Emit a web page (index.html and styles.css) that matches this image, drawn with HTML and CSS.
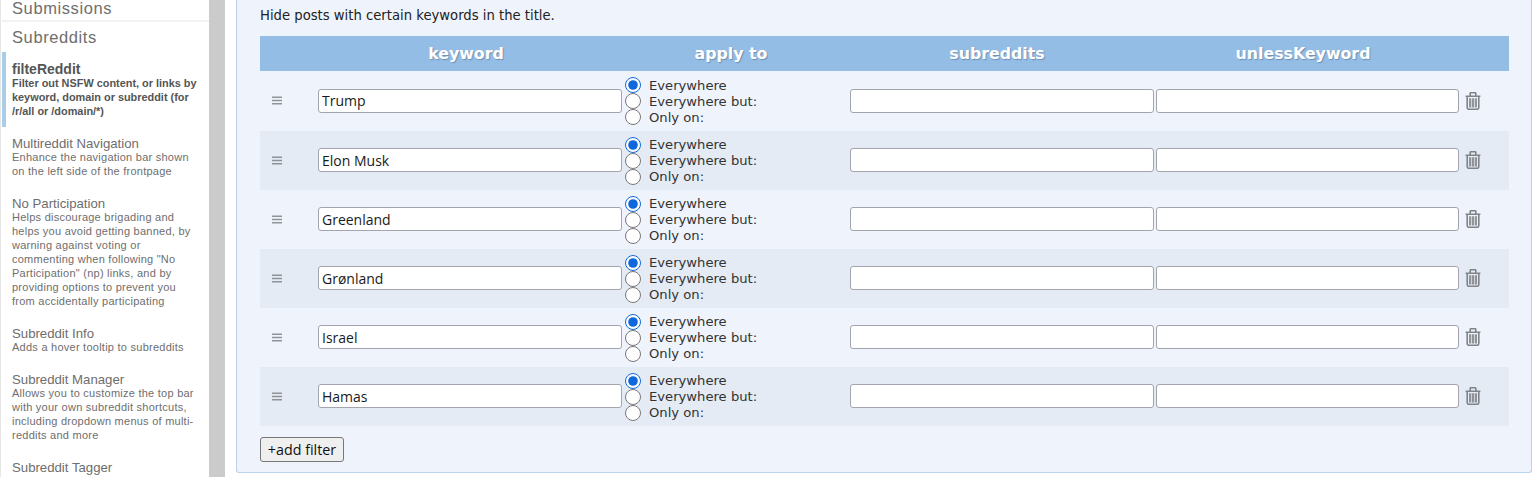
FILE: index.html
```html
<!DOCTYPE html>
<html lang="en">
<head>
<meta charset="utf-8">
<title>RES settings - filteReddit</title>
<link rel="stylesheet" href="styles.css">
</head>
<body>
<svg class="defs" width="0" height="0" aria-hidden="true">
  <symbol id="grip" viewBox="0 0 10 9"><path d="M0 .5h10v1.4H0zM0 3.8h10v1.4H0zM0 7.1h10v1.4H0z"/></symbol>
  <symbol id="trash" viewBox="0 0 16 18"><path fill="none" stroke="currentColor" stroke-width="1.6" d="M.6 4.2h14.8M5.2 4V1.5q0-.8.8-.8h4q.8 0 .8.8V4M2.2 4.4v11.2q0 1.7 1.7 1.7h8.2q1.7 0 1.7-1.7V4.4"/><path fill="currentColor" opacity=".85" d="M4 6.2h2.2v9.4H4zM6.9 6.2h2.2v9.4H6.9zM9.8 6.2H12v9.4H9.8z"/></symbol>
</svg>
<div class="page">
  <nav class="sidebar">
    <div class="category cut">Submissions</div>
    <div class="category open">Subreddits</div>
    <ul class="modules">
      <li class="module active"><b class="mod-name">filteReddit</b><span class="mod-desc">Filter out NSFW content, or links by keyword, domain or subreddit (for /r/all or /domain/*)</span></li>
      <li class="module"><span class="mod-name">Multireddit Navigation</span><span class="mod-desc">Enhance the navigation bar shown on the left side of the frontpage</span></li>
      <li class="module"><span class="mod-name">No Participation</span><span class="mod-desc">Helps discourage brigading and helps you avoid getting banned, by warning against voting or commenting when following "No Participation" (np) links, and by providing options to prevent you from accidentally participating</span></li>
      <li class="module"><span class="mod-name">Subreddit Info</span><span class="mod-desc">Adds a hover tooltip to subreddits</span></li>
      <li class="module"><span class="mod-name">Subreddit Manager</span><span class="mod-desc">Allows you to customize the top bar with your own subreddit shortcuts, including dropdown menus of multi-reddits and more</span></li>
      <li class="module"><span class="mod-name">Subreddit Tagger</span></li>
    </ul>
  </nav>
  <div class="scrollbar"></div>
  <main class="content">
    <section class="panel">
      <p class="intro">Hide posts with certain keywords in the title.</p>
      <div class="table">
        <div class="head">
          <span>keyword</span><span>apply to</span><span>subreddits</span><span>unlessKeyword</span>
        </div>
        <div class="row">
          <svg class="grip"><use href="#grip"/></svg>
          <input class="field" type="text" value="Trump">
          <div class="apply"><label><input type="radio" name="a1" checked>Everywhere</label><label><input type="radio" name="a1">Everywhere but:</label><label><input type="radio" name="a1">Only on:</label></div>
          <input class="field" type="text"><input class="field" type="text">
          <svg class="trash"><use href="#trash"/></svg>
        </div>
        <div class="row">
          <svg class="grip"><use href="#grip"/></svg>
          <input class="field" type="text" value="Elon Musk">
          <div class="apply"><label><input type="radio" name="a2" checked>Everywhere</label><label><input type="radio" name="a2">Everywhere but:</label><label><input type="radio" name="a2">Only on:</label></div>
          <input class="field" type="text"><input class="field" type="text">
          <svg class="trash"><use href="#trash"/></svg>
        </div>
        <div class="row">
          <svg class="grip"><use href="#grip"/></svg>
          <input class="field" type="text" value="Greenland">
          <div class="apply"><label><input type="radio" name="a3" checked>Everywhere</label><label><input type="radio" name="a3">Everywhere but:</label><label><input type="radio" name="a3">Only on:</label></div>
          <input class="field" type="text"><input class="field" type="text">
          <svg class="trash"><use href="#trash"/></svg>
        </div>
        <div class="row">
          <svg class="grip"><use href="#grip"/></svg>
          <input class="field" type="text" value="Grønland">
          <div class="apply"><label><input type="radio" name="a4" checked>Everywhere</label><label><input type="radio" name="a4">Everywhere but:</label><label><input type="radio" name="a4">Only on:</label></div>
          <input class="field" type="text"><input class="field" type="text">
          <svg class="trash"><use href="#trash"/></svg>
        </div>
        <div class="row">
          <svg class="grip"><use href="#grip"/></svg>
          <input class="field" type="text" value="Israel">
          <div class="apply"><label><input type="radio" name="a5" checked>Everywhere</label><label><input type="radio" name="a5">Everywhere but:</label><label><input type="radio" name="a5">Only on:</label></div>
          <input class="field" type="text"><input class="field" type="text">
          <svg class="trash"><use href="#trash"/></svg>
        </div>
        <div class="row">
          <svg class="grip"><use href="#grip"/></svg>
          <input class="field" type="text" value="Hamas">
          <div class="apply"><label><input type="radio" name="a6" checked>Everywhere</label><label><input type="radio" name="a6">Everywhere but:</label><label><input type="radio" name="a6">Only on:</label></div>
          <input class="field" type="text"><input class="field" type="text">
          <svg class="trash"><use href="#trash"/></svg>
        </div>
      </div>
      <button class="add" type="button">+add filter</button>
    </section>
  </main>
</div>
</body>
</html>
```
FILE: styles.css
```css
* { box-sizing: border-box; }
html, body { margin: 0; height: 477px; overflow: hidden; background: #fff; }
.defs { position: absolute; }
.page { display: flex; height: 477px; font-family: "Liberation Sans", Arial, sans-serif; }

.sidebar { width: 209px; flex: none; padding-left: 1px; border-left: 1px solid #e6e6e6; color: #6e6e6e; overflow: hidden; }
.category { font-size: 16.5px; letter-spacing: .6px; padding-left: 10px; line-height: 31px; border-bottom: 2px solid #f2f2f2; }
.category.cut { height: 22px; line-height: 17px; }
.category.open { border-bottom: 0; height: 30px; }
.modules { list-style: none; margin: 0; padding: 0; }
.module { padding: 9px 10px 0 10px; margin-bottom: 9px; font-size: 11px; letter-spacing: .25px; line-height: 14px; }
.module.active { border-left: 4px solid #a9cde6; padding: 10px 10px 0 6px; color: #555; font-weight: 700; font-size: 10.9px; letter-spacing: 0; height: 75px; margin-bottom: 0; }
.mod-name { display: block; font-size: 13.2px; font-weight: 400; letter-spacing: 0; line-height: 16px; margin-bottom: -2px; }
b.mod-name { font-weight: 700; font-size: 14px; line-height: 14px; margin-bottom: 0; }
.mod-desc { display: block; }

.scrollbar { width: 16px; flex: none; background: #cbcbcb; }
.content { flex: 1; padding: 0 4px 4px 11px; min-width: 0; }
.panel { height: 473px; padding: 0 22px 0 23px; background: #eff3fc; border: 1px solid #b9d3ee; border-top: 0; border-radius: 0 0 3px 3px; font-family: "DejaVu Sans", Verdana, sans-serif; color: #222; }
.intro { margin: 0; padding-top: 8px; height: 36px; font-size: 13.2px; line-height: 15px; }

.head { display: grid; grid-template-columns: 50px 312px 218px 314px 298px; height: 35px; align-items: center; background: #94bde6; color: #fff; font-size: 15.8px; font-weight: 700; text-align: center; text-shadow: 1px 1px 1px #6f8fb0; }
.head span:first-child { grid-column: 2; }
.row { display: grid; grid-template-columns: 58px 304px 228px 303px 303px 1fr; height: 59px; align-items: center; }
.head + .row { height: 60px; }
.row:nth-child(odd) { background: #e4ebf4; }
.row .field:nth-of-type(3) { margin-left: 3px; width: 303px; }
.grip { width: 10px; height: 9px; margin: -1px 0 0 12px; fill: #8f9398; }
.trash { width: 16px; height: 18px; margin: -1px 0 0 9px; color: #808387; }
.field { width: 304px; height: 24px; padding: 1px 3px; margin: -1px 0 0; background: #fff; border: 1px solid #a4a4ae; border-radius: 3px; font-family: "Open Sans", "DejaVu Sans", sans-serif; font-size: 14px; color: #1a1a1a; }
.apply { display: flex; flex-direction: column; padding-left: 3px; font-size: 13.15px; color: #333; }
.apply label { display: flex; align-items: center; height: 16px; }
.apply input { width: 16px; height: 16px; margin: 0 8px 0 0; accent-color: #0f67dc; }
.add { display: block; margin-top: 11px; width: 84px; height: 25px; padding: 0; background: #efeff0; border: 1px solid #777; border-radius: 3px; font-family: "Open Sans", "DejaVu Sans", sans-serif; font-size: 14.3px; color: #111; }
```
